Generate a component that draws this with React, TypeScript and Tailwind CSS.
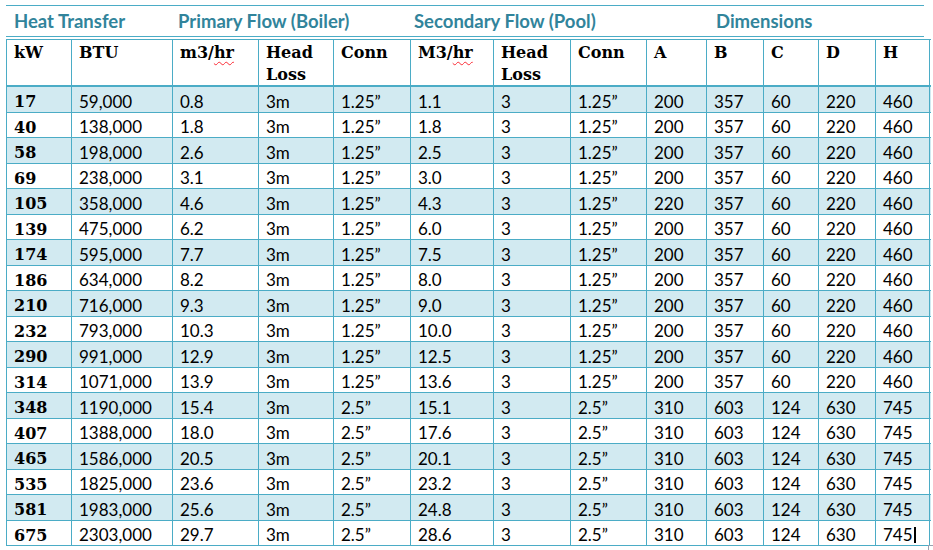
import React from 'react';

const cols = 'grid grid-cols-[65px_101px_86px_75px_77px_83px_77px_76px_60px_57px_55px_57px_54px]';

const rows: string[][] = [
  ['17', '59,000', '0.8', '1.1', 'a'],
  ['40', '138,000', '1.8', '1.8', 'a'],
  ['58', '198,000', '2.6', '2.5', 'a'],
  ['69', '238,000', '3.1', '3.0', 'a'],
  ['105', '358,000', '4.6', '4.3', 'c'],
  ['139', '475,000', '6.2', '6.0', 'a'],
  ['174', '595,000', '7.7', '7.5', 'a'],
  ['186', '634,000', '8.2', '8.0', 'a'],
  ['210', '716,000', '9.3', '9.0', 'a'],
  ['232', '793,000', '10.3', '10.0', 'a'],
  ['290', '991,000', '12.9', '12.5', 'a'],
  ['314', '1071,000', '13.9', '13.6', 'a'],
  ['348', '1190,000', '15.4', '15.1', 'b'],
  ['407', '1388,000', '18.0', '17.6', 'b'],
  ['465', '1586,000', '20.5', '20.1', 'b'],
  ['535', '1825,000', '23.6', '23.2', 'b'],
  ['581', '1983,000', '25.6', '24.8', 'b'],
  ['675', '2303,000', '29.7', '28.6', 'b'],
];

const dims: Record<string, string[]> = {
  a: ['1.25”', '200', '357', '60', '220', '460'],
  c: ['1.25”', '220', '357', '60', '220', '460'],
  b: ['2.5”', '310', '603', '124', '630', '745'],
};

const serif = "font-['DejaVu_Serif',serif] font-bold";
const sans = "font-['Lato','Noto_Sans',sans-serif]";

function Hr() {
  return <span className="underline decoration-wavy decoration-red-500 decoration-1 underline-offset-[3px]">hr</span>;
}

export default function App() {
  const headers: React.ReactNode[] = [
    'kW',
    'BTU',
    <>m3/<Hr /></>,
    <>Head<br />Loss</>,
    'Conn',
    <>M3/<Hr /></>,
    <>Head<br />Loss</>,
    'Conn',
    'A',
    'B',
    'C',
    'D',
    'H',
  ];

  return (
    <div className="relative w-[933px] h-[550px] overflow-hidden bg-white pl-[6px] pt-[5px] text-black">
      {/* group titles */}
      <div className={`w-[918px] h-[32px] border-t border-b border-[#4bacc6] flex items-center pl-[8px] ${sans} font-bold text-[18.5px] leading-[22px] text-[#31849b]`}>
        <span className="w-[164px]">Heat Transfer</span>
        <span className="w-[236px]">Primary Flow (Boiler)</span>
        <span className="w-[302px]">Secondary Flow (Pool)</span>
        <span>Dimensions</span>
      </div>

      <div className="mt-[2px] w-[925px] border-l border-t border-[#4bacc6]">
        <div className={`${cols} h-[47px] border-b-2 border-[#4bacc6]`}>
          {headers.map((h, i) => (
            <div key={i} className={`border-r border-[#4bacc6] pl-[7px] pt-[2px] leading-[22px] text-[16px] ${serif}`}>
              {h}
            </div>
          ))}
        </div>
        {rows.map((r, ri) => {
          const d = dims[r[4]];
          const cells = [r[1], r[2], '3m', d[0], r[3], '3', d[0], d[1], d[2], d[3], d[4], d[5]];
          return (
            <div
              key={r[0]}
              className={`${cols} h-[25.5px] border-b border-[#4bacc6] ${ri % 2 === 0 ? 'bg-[#d2eaf1]' : 'bg-white'}`}
            >
              <div className={`border-r border-[#4bacc6] pl-[7px] pt-[5px] flex items-center leading-[20px] text-[16px] ${serif}`}>{r[0]}</div>
              {cells.map((c, ci) => (
                <div key={ci} className={`border-r border-[#4bacc6] pl-[7px] pt-[4px] flex items-center leading-[20px] text-[17px] ${sans}`}>
                  {c}
                  {ri === rows.length - 1 && ci === cells.length - 1 && (
                    <span className="ml-[1px] inline-block w-[2px] h-[16px] bg-black" />
                  )}
                </div>
              ))}
            </div>
          );
        })}
      </div>

      {/* resize corner mark */}
      <div className="absolute right-0 bottom-0 w-[5px] h-[5px] border-l border-t border-gray-400" />
    </div>
  );
}
